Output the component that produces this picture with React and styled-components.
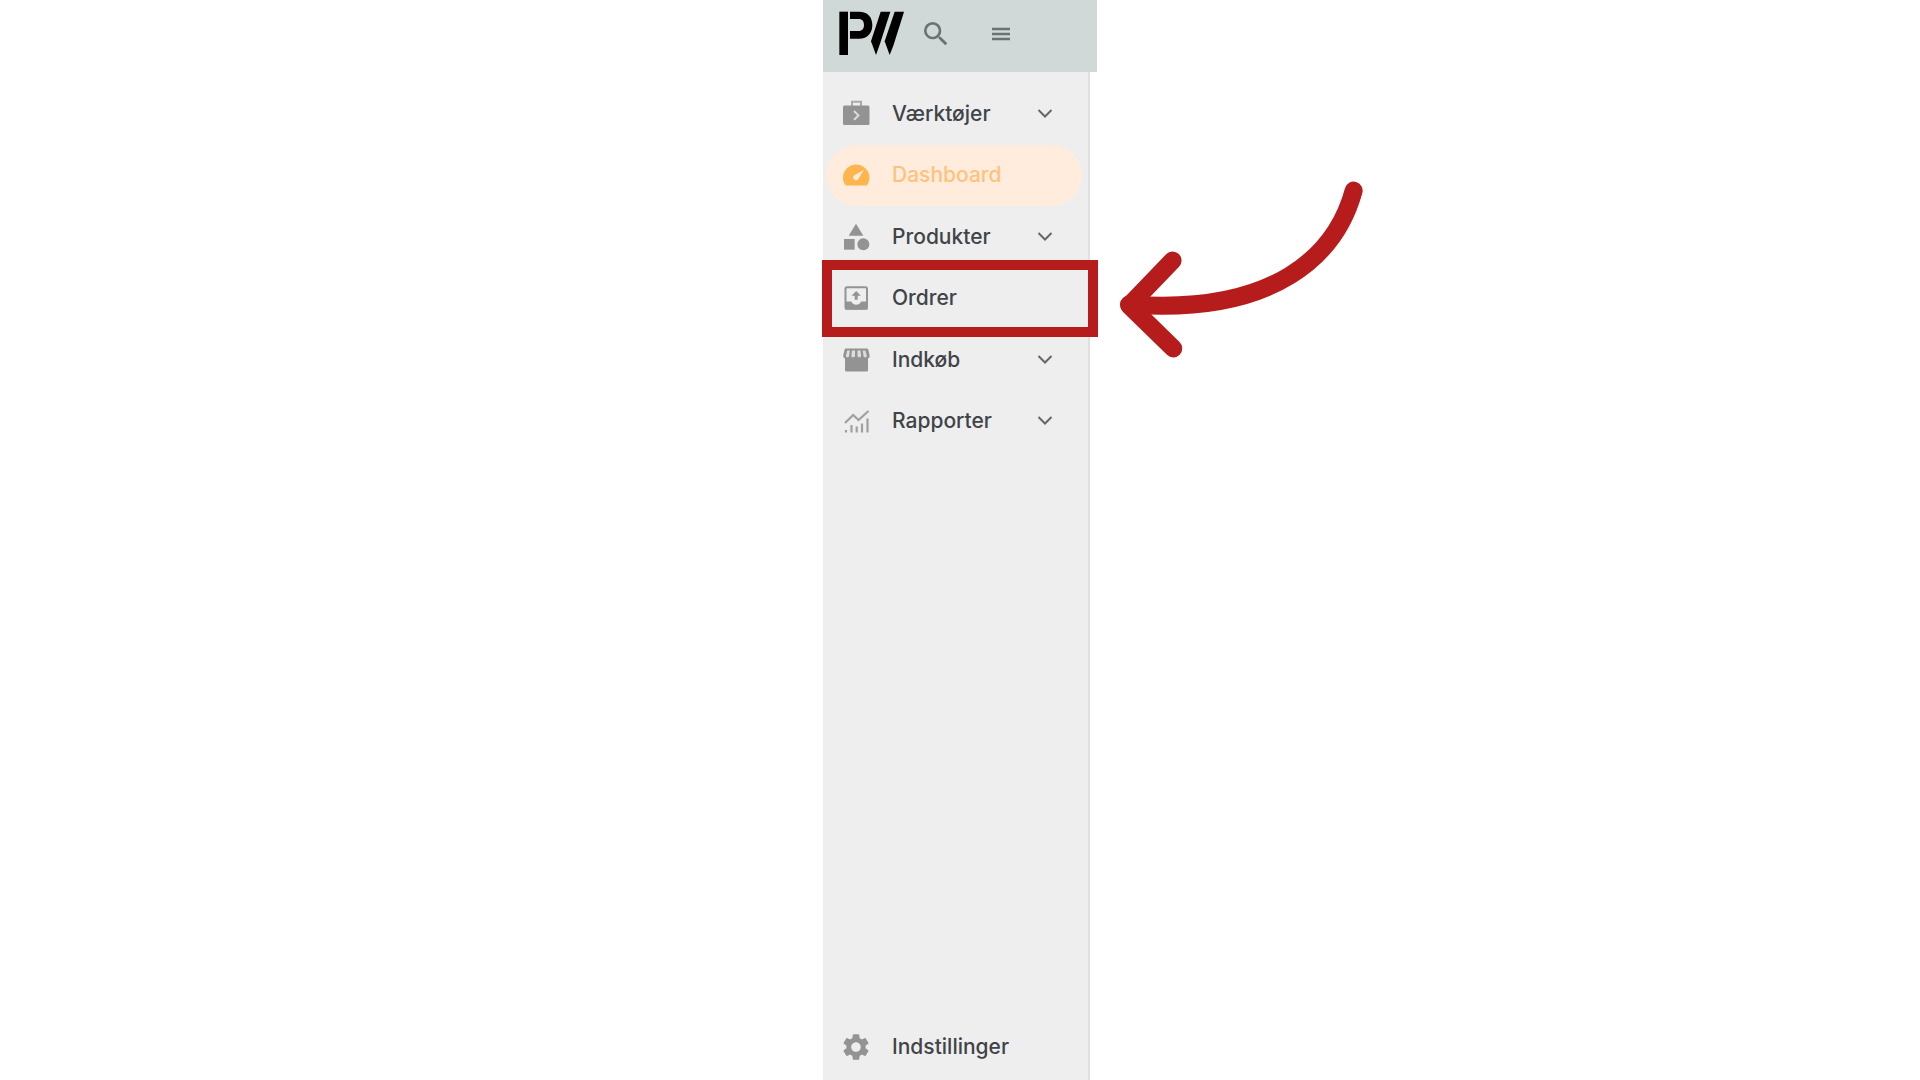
import React from "react";
import styled, { createGlobalStyle } from "styled-components";
import { MdCategory, MdSearch, MdSettings } from "react-icons/md";

const GlobalStyle = createGlobalStyle`
  *, *::before, *::after { box-sizing: border-box; }
  body {
    margin: 0;
    background: #fff;
    font-family: Inter, Roboto, "Liberation Sans", sans-serif;
  }
`;

const Page = styled.div`
  display: flex;
  justify-content: center;
  min-height: 100vh;
  overflow: hidden;
`;

const Shell = styled.div`
  display: flex;
  flex-direction: column;
  width: 274px;
`;

const TopBar = styled.header`
  display: flex;
  align-items: center;
  height: 72px;
  padding: 0 16px 5px;
  background: #d0d9d7;
`;

const Logo = styled.svg`
  display: block;
  width: 66px;
  height: 45px;
  margin-right: 11px;
`;

const IconButton = styled.button`
  display: grid;
  place-items: center;
  width: 40px;
  height: 40px;
  margin-right: 25px;
  padding: 0;
  border: 0;
  background: none;
  color: #6b7272;
  cursor: pointer;
`;

const SidePanel = styled.aside`
  display: flex;
  flex: 1;
  flex-direction: column;
  justify-content: space-between;
  margin-right: 7px;
  padding: 11px 6px 3px 3px;
  border-right: 2px solid #e0e0e0;
  background: #eee;
`;

const NavList = styled.ul`
  display: grid;
  grid-auto-rows: 1fr;
  height: ${(p) => p.$height}px;
  margin: 0;
  padding: 0;
  list-style: none;
`;

const NavItem = styled.li`
  position: relative;
  display: grid;
`;

const NavLink = styled.a`
  display: flex;
  align-items: center;
  padding: 0 29px 0 14px;
  border-radius: 31px;
  background: ${(p) => (p.$active ? "#ffecdd" : "transparent")};
  color: ${(p) => (p.$active ? "#ffc27c" : "#404448")};
  font-size: 21px;
  font-weight: 500;
  line-height: 28px;
  text-decoration: none;

  > svg:first-child {
    flex: none;
    width: 32px;
    height: 32px;
    color: ${(p) => (p.$active ? "#ffb54d" : "#939393")};
  }
`;

const Label = styled.span`
  flex: 1;
  margin-left: 20px;
`;

const Highlight = styled.div`
  position: absolute;
  top: -8px;
  left: -4px;
  z-index: 1;
  width: 276px;
  height: 77px;
  border: 10px solid #b71c1c;
  pointer-events: none;
`;

const Pointer = styled.svg`
  position: absolute;
  top: -87px;
  left: 294px;
  width: 243px;
  height: 177px;
  pointer-events: none;
`;

const ToolsIcon = () => (
  <svg viewBox="0 0 32 32" fill="none" aria-hidden="true">
    <path d="M12 8V3.800h9V8" stroke="currentColor" strokeWidth="2" opacity=".75" />
    <rect x="3" y="7.500" width="26.500" height="19.500" rx="1.500" fill="currentColor" />
    <path d="m14 13 4.500 4.400-4.500 4.400" stroke="#ddd" strokeWidth="2" />
  </svg>
);

const GaugeIcon = () => (
  <svg viewBox="0 0 32 32" aria-hidden="true">
    <path d="M5.800 26.500C4 24.500 3 21.800 3 18.800a13.200 13.200 0 0 1 26.400 0c0 3-1 5.700-2.800 7.700z" fill="currentColor" />
    <path d="M23.800 11 18.500 19.700a2.800 2.800 0 1 1-4.200-3.500z" fill="#ffecdd" />
  </svg>
);

const OutboxIcon = () => (
  <svg viewBox="0 0 32 32" fill="none" aria-hidden="true">
    <rect x="5.500" y="5.300" width="21.500" height="21.500" rx="1.500" stroke="currentColor" strokeWidth="2" />
    <path d="M5 19.500h6.500c.8 2.200 2.500 3.300 4.700 3.300s4-1.100 4.800-3.300h6.500v8H5z" fill="currentColor" />
    <path d="M11.500 13.700 16.200 9l4.700 4.700h-3.200v4h-3v-4z" fill="currentColor" />
  </svg>
);

const StoreIcon = () => (
  <svg viewBox="0 0 32 32" aria-hidden="true">
    <path d="M6 4.500h20.500c1 0 1.600.5 1.900 1.500l1.200 5c.4 2-.4 3-1.600 3.500v11.500c0 1-.6 1.600-1.600 1.600H6.600C5.600 27.600 5 27 5 26V14.500C3.600 14 3 13 3.300 11l1.200-5c.2-1 .7-1.500 1.500-1.500z" fill="currentColor" />
    <path d="M7.200 6.500h2.600l-.7 5.500c-.3 1.700-3.500 1.700-3.200 0zM12 6.500h3V12c-.2 1.700-3.700 1.700-3.600 0zM17.500 6.500h3l.6 5.500c0 1.700-3.500 1.700-3.600 0zM22.800 6.500h2.500l1.500 5.500c.2 1.700-3 1.700-3.300 0z" fill="#ddd" />
  </svg>
);

const ReportsIcon = () => (
  <svg viewBox="0 0 32 32" fill="none" stroke="currentColor" strokeWidth="2.200" aria-hidden="true" opacity=".85">
    <path d="m5 18 8.200-8 5.300 5L28.500 6" />
    <path d="M6 25v2.500M11.500 20v7.500M16.700 21.500v6M22 18.500v9M27.500 13.500v14" />
  </svg>
);

const Chevron = () => (
  <svg width="16" height="16" viewBox="0 0 16 16" fill="none" aria-hidden="true">
    <path d="m1.500 4 6.500 6.500L14.500 4" stroke="#666" strokeWidth="2" />
  </svg>
);

const mainItems = [
  { label: "Værktøjer", icon: ToolsIcon, expandable: true },
  { label: "Dashboard", icon: GaugeIcon, active: true },
  { label: "Produkter", icon: MdCategory, expandable: true },
  { label: "Ordrer", icon: OutboxIcon, highlighted: true },
  { label: "Indkøb", icon: StoreIcon, expandable: true },
  { label: "Rapporter", icon: ReportsIcon, expandable: true },
];

const footerItems = [{ label: "Indstillinger", icon: MdSettings }];

function NavEntry({ label, icon: Icon, active, expandable, highlighted }) {
  return (
    <NavItem>
      <NavLink href="#" $active={active} aria-current={active ? "page" : undefined}>
        <Icon />
        <Label>{label}</Label>
        {expandable && <Chevron />}
      </NavLink>
      {highlighted && (
        <>
          <Highlight />
          <Pointer viewBox="90 62 730 530" fill="none" stroke="#b71c1c" strokeWidth="54" strokeLinecap="round" strokeLinejoin="round" aria-hidden="true">
            <path d="M792 90C740 280 560 465 117 432" />
            <path d="M248 300 118 435l132 129" />
          </Pointer>
        </>
      )}
    </NavItem>
  );
}

export default function App() {
  return (
    <>
      <GlobalStyle />
      <Page>
        <Shell>
          <TopBar>
            <Logo viewBox="72 34 198 135" role="img" aria-label="PW">
              <path d="M73 36h26v130H73z" />
              <path d="M105 36h27c26 0 40 16 40 40s-14 41-40 41h-27V94h26c11 0 16-7 16-18s-5-18-16-18h-26z" />
              <path d="M197 36h29l-32 99-11 31-15-41z" />
              <path d="M239 36h28l-31 99-12 31-15-41z" />
            </Logo>
            <IconButton type="button" aria-label="Søg">
              <MdSearch size={32} />
            </IconButton>
            <IconButton type="button" aria-label="Menu">
              <svg width="18" height="14" viewBox="0 0 18 14" fill="none" stroke="currentColor" strokeWidth="2.400" aria-hidden="true">
                <path d="M0 2h18M0 7h18M0 12h18" />
              </svg>
            </IconButton>
          </TopBar>
          <SidePanel>
            <nav aria-label="Hovedmenu">
              <NavList $height={369}>
                {mainItems.map((item) => (
                  <NavEntry key={item.label} {...item} />
                ))}
              </NavList>
            </nav>
            <NavList $height={61}>
              {footerItems.map((item) => (
                <NavEntry key={item.label} {...item} />
              ))}
            </NavList>
          </SidePanel>
        </Shell>
      </Page>
    </>
  );
}
